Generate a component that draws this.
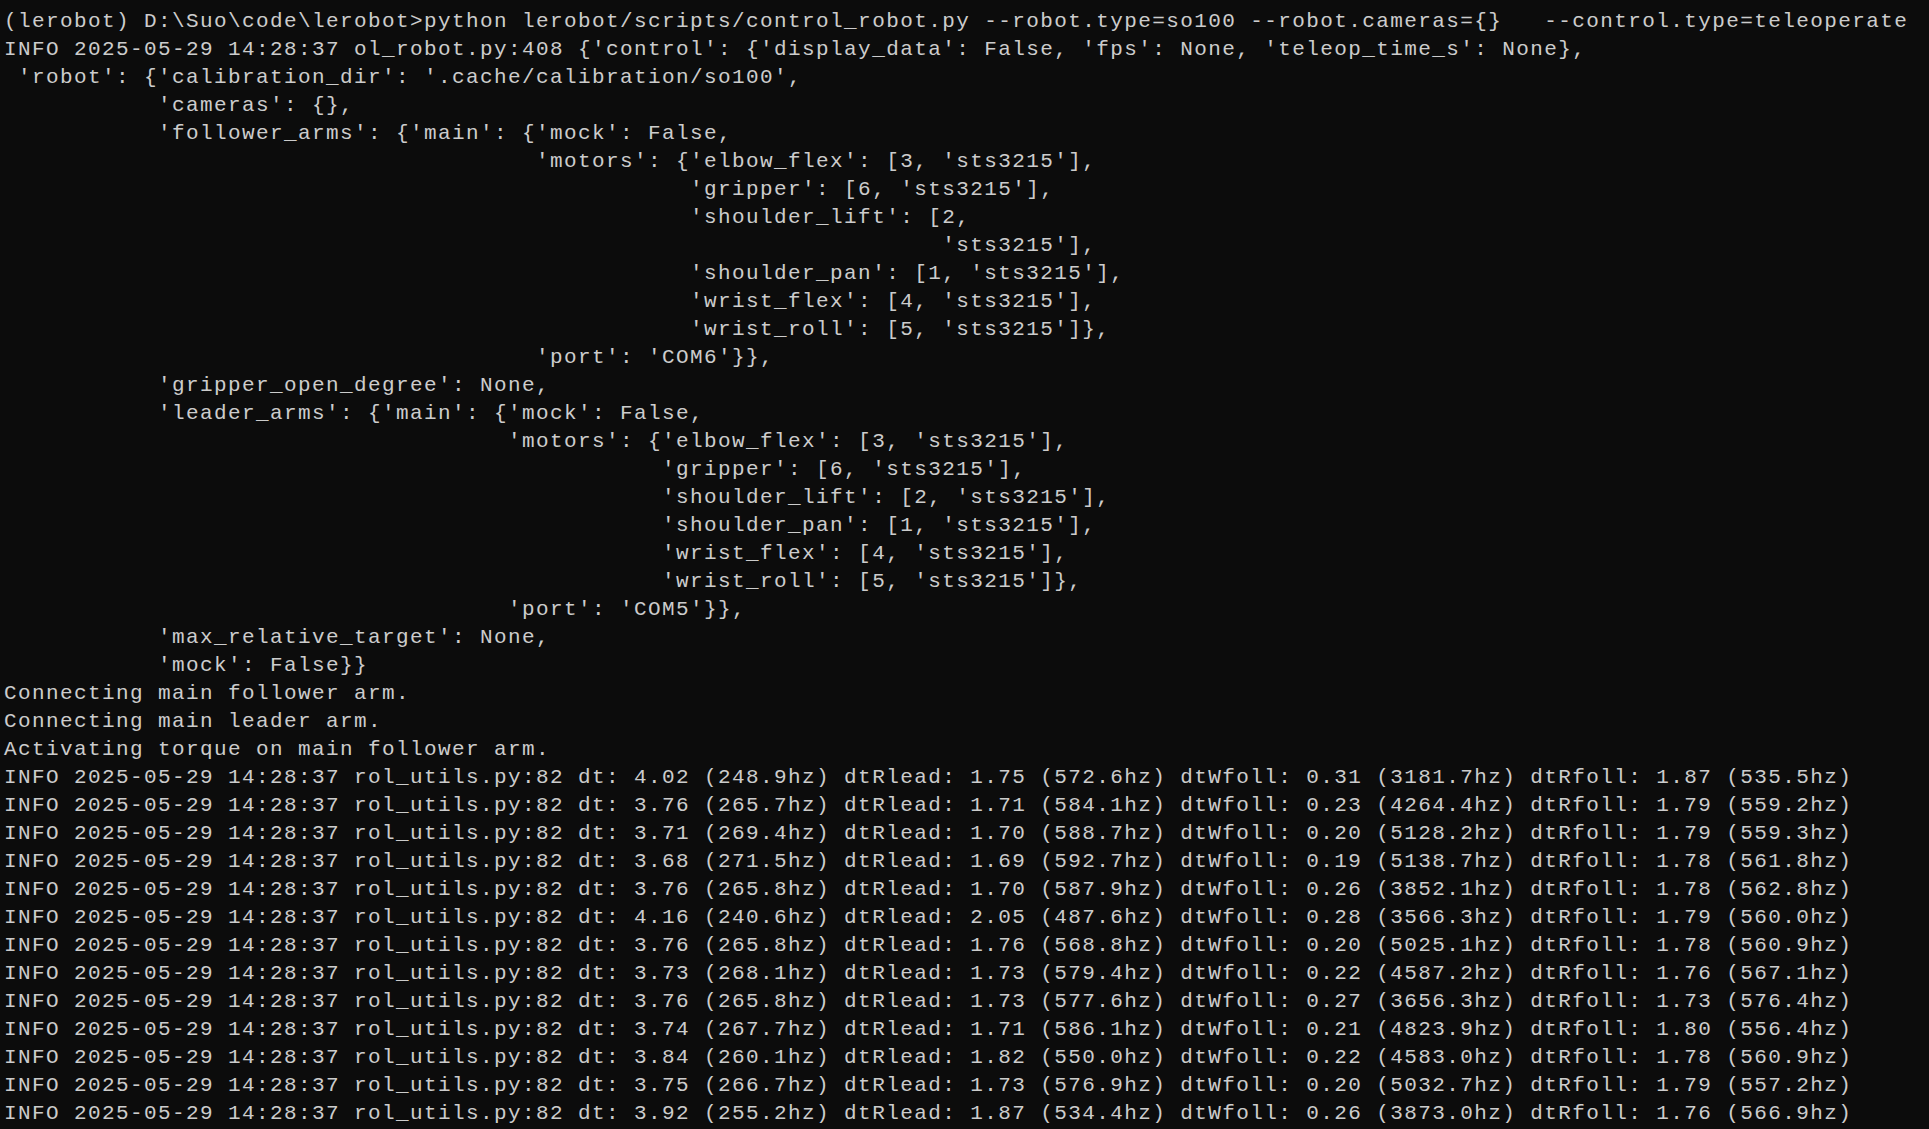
const header = [
  "(lerobot) D:\\Suo\\code\\lerobot>python lerobot/scripts/control_robot.py --robot.type=so100 --robot.cameras={}   --control.type=teleoperate",
  "INFO 2025-05-29 14:28:37 ol_robot.py:408 {'control': {'display_data': False, 'fps': None, 'teleop_time_s': None},",
  " 'robot': {'calibration_dir': '.cache/calibration/so100',",
  "           'cameras': {},",
  "           'follower_arms': {'main': {'mock': False,",
  "                                      'motors': {'elbow_flex': [3, 'sts3215'],",
  "                                                 'gripper': [6, 'sts3215'],",
  "                                                 'shoulder_lift': [2,",
  "                                                                   'sts3215'],",
  "                                                 'shoulder_pan': [1, 'sts3215'],",
  "                                                 'wrist_flex': [4, 'sts3215'],",
  "                                                 'wrist_roll': [5, 'sts3215']},",
  "                                      'port': 'COM6'}},",
  "           'gripper_open_degree': None,",
  "           'leader_arms': {'main': {'mock': False,",
  "                                    'motors': {'elbow_flex': [3, 'sts3215'],",
  "                                               'gripper': [6, 'sts3215'],",
  "                                               'shoulder_lift': [2, 'sts3215'],",
  "                                               'shoulder_pan': [1, 'sts3215'],",
  "                                               'wrist_flex': [4, 'sts3215'],",
  "                                               'wrist_roll': [5, 'sts3215']},",
  "                                    'port': 'COM5'}},",
  "           'max_relative_target': None,",
  "           'mock': False}}",
  "Connecting main follower arm.",
  "Connecting main leader arm.",
  "Activating torque on main follower arm.",
]

// dt, dtRlead, dtWfoll, dtRfoll readings
const timings = [
  ["4.02 (248.9hz)", "1.75 (572.6hz)", "0.31 (3181.7hz)", "1.87 (535.5hz)"],
  ["3.76 (265.7hz)", "1.71 (584.1hz)", "0.23 (4264.4hz)", "1.79 (559.2hz)"],
  ["3.71 (269.4hz)", "1.70 (588.7hz)", "0.20 (5128.2hz)", "1.79 (559.3hz)"],
  ["3.68 (271.5hz)", "1.69 (592.7hz)", "0.19 (5138.7hz)", "1.78 (561.8hz)"],
  ["3.76 (265.8hz)", "1.70 (587.9hz)", "0.26 (3852.1hz)", "1.78 (562.8hz)"],
  ["4.16 (240.6hz)", "2.05 (487.6hz)", "0.28 (3566.3hz)", "1.79 (560.0hz)"],
  ["3.76 (265.8hz)", "1.76 (568.8hz)", "0.20 (5025.1hz)", "1.78 (560.9hz)"],
  ["3.73 (268.1hz)", "1.73 (579.4hz)", "0.22 (4587.2hz)", "1.76 (567.1hz)"],
  ["3.76 (265.8hz)", "1.73 (577.6hz)", "0.27 (3656.3hz)", "1.73 (576.4hz)"],
  ["3.74 (267.7hz)", "1.71 (586.1hz)", "0.21 (4823.9hz)", "1.80 (556.4hz)"],
  ["3.84 (260.1hz)", "1.82 (550.0hz)", "0.22 (4583.0hz)", "1.78 (560.9hz)"],
  ["3.75 (266.7hz)", "1.73 (576.9hz)", "0.20 (5032.7hz)", "1.79 (557.2hz)"],
  ["3.92 (255.2hz)", "1.87 (534.4hz)", "0.26 (3873.0hz)", "1.76 (566.9hz)"],
]

const lines = [
  ...header,
  ...timings.map(
    ([dt, rl, wf, rf]) =>
      `INFO 2025-05-29 14:28:37 rol_utils.py:82 dt: ${dt} dtRlead: ${rl} dtWfoll: ${wf} dtRfoll: ${rf}`
  ),
]

export default function App() {
  return (
    <div className="w-[1929px] h-[1129px] overflow-hidden bg-[#0c0c0c] text-[#cccccc] pl-[4px] pt-[8px] font-['Liberation_Mono',monospace] text-[21px] leading-[28px] tracking-[1.4px]">
      {lines.map((line, i) => (
        <div key={i} className="whitespace-pre h-[28px]">
          {line}
        </div>
      ))}
    </div>
  )
}
